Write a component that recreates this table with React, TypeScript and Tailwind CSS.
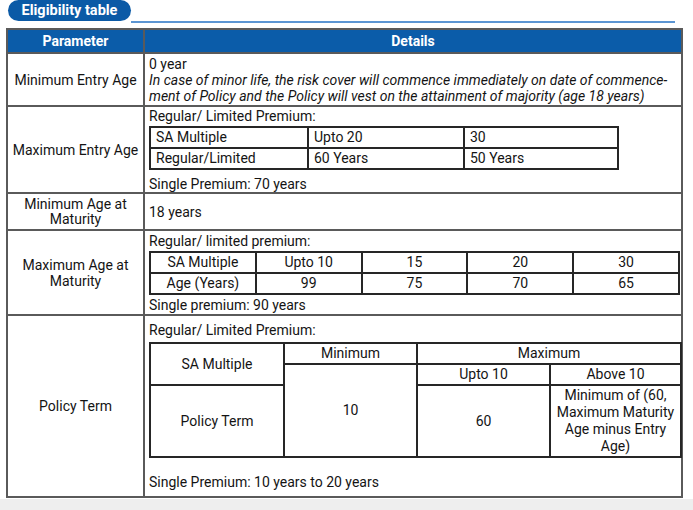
import React from "react";

const outerCell = "border-2 border-[#5a5a5a]";
const innerCell = "border-2 border-[#262626] h-[21px] leading-[15px]";

const EntryAgeTable = () => (
  <table className="w-[468px] table-fixed border-collapse">
    <colgroup>
      <col className="w-[158px]" />
      <col className="w-[156px]" />
      <col className="w-[154px]" />
    </colgroup>
    <tbody>
      <tr>
        <td className={`${innerCell} px-[5px]`}>SA Multiple</td>
        <td className={`${innerCell} px-[5px]`}>Upto 20</td>
        <td className={`${innerCell} px-[5px]`}>30</td>
      </tr>
      <tr>
        <td className={`${innerCell} px-[5px]`}>Regular/Limited</td>
        <td className={`${innerCell} px-[5px]`}>60 Years</td>
        <td className={`${innerCell} px-[5px]`}>50 Years</td>
      </tr>
    </tbody>
  </table>
);

const MaturityTable = () => {
  const rows = [
    ["SA Multiple", "Upto 10", "15", "20", "30"],
    ["Age (Years)", "99", "75", "70", "65"],
  ];
  return (
    <table className="w-[531px] table-fixed border-collapse text-center">
      <tbody>
        {rows.map((r) => (
          <tr key={r[0]}>
            {r.map((c, i) => (
              <td key={i} className={innerCell}>
                {c}
              </td>
            ))}
          </tr>
        ))}
      </tbody>
    </table>
  );
};

const PolicyTermTable = () => (
  <table className="w-[531px] table-fixed border-collapse text-center">
    <colgroup>
      <col className="w-[134px]" />
      <col className="w-[133px]" />
      <col className="w-[133px]" />
      <col className="w-[131px]" />
    </colgroup>
    <tbody>
      <tr>
        <td rowSpan={2} className={innerCell}>
          SA Multiple
        </td>
        <td className={innerCell}>Minimum</td>
        <td colSpan={2} className={innerCell}>
          Maximum
        </td>
      </tr>
      <tr>
        <td rowSpan={2} className={innerCell}>
          10
        </td>
        <td className={innerCell}>Upto 10</td>
        <td className={innerCell}>Above 10</td>
      </tr>
      <tr className="h-[72px]">
        <td className={innerCell}>Policy Term</td>
        <td className={innerCell}>60</td>
        <td className={`${innerCell} leading-[17px] whitespace-nowrap`}>
          Minimum of (60,
          <br />
          Maximum Maturity
          <br />
          Age minus Entry
          <br />
          Age)
        </td>
      </tr>
    </tbody>
  </table>
);

const App = () => {
  return (
    <div className="w-[693px] h-[510px] bg-white flex flex-col font-[Roboto,'Liberation_Sans',sans-serif] text-[14px] text-[#141414]">
      <div className="flex items-start pl-[8px] pr-[18px] h-[28px]">
        <div className="h-[21px] w-[123px] rounded-full bg-[#0b5aa6] text-white font-bold text-[14.5px] flex items-center justify-center">
          Eligibility table
        </div>
        <div className="flex-1 h-[23px] border-b-2 border-[#5b95d3]" />
      </div>

      <table className="ml-[6px] w-[677px] table-fixed border-collapse">
        <colgroup>
          <col className="w-[137px]" />
          <col />
        </colgroup>
        <thead>
          <tr className="h-[24px] bg-[#0b5ca9] text-white font-bold">
            <th className={`${outerCell} border-[#2b2b2b]`}>Parameter</th>
            <th className={`${outerCell} border-[#2b2b2b]`}>Details</th>
          </tr>
        </thead>
        <tbody className="leading-[16px]">
          <tr className="h-[53px]">
            <td className={`${outerCell} text-center`}>Minimum Entry Age</td>
            <td className={`${outerCell} pl-[4px] whitespace-nowrap`}>
              <div>0 year</div>
              <div className="italic">
                In case of minor life, the risk cover will commence immediately on date of commence-
                <br />
                ment of Policy and the Policy will vest on the attainment of majority (age 18 years)
              </div>
            </td>
          </tr>
          <tr className="h-[87px]">
            <td className={`${outerCell} text-center`}>Maximum Entry Age</td>
            <td className={`${outerCell} pl-[4px]`}>
              <div className="flex flex-col">
                <span>Regular/ Limited Premium:</span>
                <div className="mt-[2px] mb-[6px]">
                  <EntryAgeTable />
                </div>
                <span>Single Premium: 70 years</span>
              </div>
            </td>
          </tr>
          <tr className="h-[37px]">
            <td className={`${outerCell} text-center leading-[15px]`}>
              Minimum Age at
              <br />
              Maturity
            </td>
            <td className={`${outerCell} pl-[4px]`}>18 years</td>
          </tr>
          <tr className="h-[85px]">
            <td className={`${outerCell} text-center`}>
              Maximum Age at
              <br />
              Maturity
            </td>
            <td className={`${outerCell} pl-[4px]`}>
              <div className="flex flex-col">
                <span>Regular/ limited premium:</span>
                <div className="my-[2px]">
                  <MaturityTable />
                </div>
                <span>Single premium: 90 years</span>
              </div>
            </td>
          </tr>
          <tr className="h-[182px]">
            <td className={`${outerCell} text-center`}>Policy Term</td>
            <td className={`${outerCell} pl-[4px]`}>
              <div className="flex flex-col">
                <span>Regular/ Limited Premium:</span>
                <div className="mt-[4px] mb-[16px]">
                  <PolicyTermTable />
                </div>
                <span>Single Premium: 10 years to 20 years</span>
              </div>
            </td>
          </tr>
        </tbody>
      </table>
      <div className="flex-1 mt-[1px] bg-[#eeeeee]" />
    </div>
  );
};

export default App;
